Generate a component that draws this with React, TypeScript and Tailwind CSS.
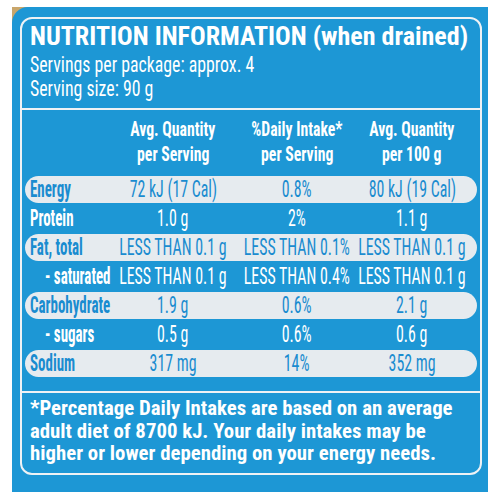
type Row = { label: string; indent?: boolean; pill?: boolean; v: [string, string, string] };

const rows: Row[] = [
  { label: "Energy", pill: true, v: ["72 kJ (17 Cal)", "0.8%", "80 kJ (19 Cal)"] },
  { label: "Protein", v: ["1.0 g", "2%", "1.1 g"] },
  { label: "Fat, total", pill: true, v: ["LESS THAN 0.1 g", "LESS THAN 0.1%", "LESS THAN 0.1 g"] },
  { label: "- saturated", indent: true, v: ["LESS THAN 0.1 g", "LESS THAN 0.4%", "LESS THAN 0.1 g"] },
  { label: "Carbohydrate", pill: true, v: ["1.9 g", "0.6%", "2.1 g"] },
  { label: "- sugars", indent: true, v: ["0.5 g", "0.6%", "0.6 g"] },
  { label: "Sodium", pill: true, v: ["317 mg", "14%", "352 mg"] },
];

function Cell({ text }: { text: string }) {
  return (
    <div className="flex justify-center whitespace-nowrap">
      <span className="inline-block origin-center scale-x-[0.69]">{text}</span>
    </div>
  );
}

export default function App() {
  return (
    <div className="h-[500px] w-[500px] overflow-hidden bg-white pl-[12px] pt-[7px] font-[family-name:Roboto,sans-serif] font-stretch-condensed text-white">
      <div className="h-[485px] w-[476px] bg-[#c9a66b]">
        <div className="h-full w-full rounded-tl-[16px] bg-[#1d97d5] pl-[8px] pt-[10px]">
          <div className="flex h-[458px] w-[462px] flex-col rounded-[12px] border-2 border-[#eef2f5]">
            {/* Title */}
            <div className="px-[8px] pb-[7px] pt-[4px]">
              <div className="whitespace-nowrap text-[26px] font-bold leading-[26px]">
                NUTRITION INFORMATION (when drained)
              </div>
              <div className="mt-[4px] whitespace-nowrap text-[22px] leading-[24px]">
                <div>
                  <span className="inline-block origin-left scale-x-[0.81]">Servings per package: approx. 4</span>
                </div>
                <div>
                  <span className="inline-block origin-left scale-x-[0.81]">Serving size: 90 g</span>
                </div>
              </div>
            </div>
            <div className="h-[2px] w-full bg-[#eef2f5]" />
            {/* Table */}
            <div className="px-[3px] pb-[14px] pt-[7px]">
              <div className="mb-[9px] grid grid-cols-[93px_110px_138px_92px] text-[21px] font-bold leading-[25px]">
                <div />
                <div className="flex flex-col items-center whitespace-nowrap">
                  <span className="inline-block scale-x-[0.75]">Avg. Quantity</span>
                  <span className="inline-block scale-x-[0.75]">per Serving</span>
                </div>
                <div className="flex flex-col items-center whitespace-nowrap">
                  <span className="inline-block scale-x-[0.75]">%Daily Intake*</span>
                  <span className="inline-block scale-x-[0.75]">per Serving</span>
                </div>
                <div className="flex flex-col items-center whitespace-nowrap">
                  <span className="inline-block scale-x-[0.75]">Avg. Quantity</span>
                  <span className="inline-block scale-x-[0.75]">per 100 g</span>
                </div>
              </div>
              {rows.map((r) => (
                <div
                  key={r.label}
                  className={
                    r.pill
                      ? "grid h-[27px] grid-cols-[93px_110px_138px_92px] items-center rounded-full bg-[#e6ebef] text-[23px] leading-[27px] text-[#1a8cd0]"
                      : "grid h-[31px] grid-cols-[93px_110px_138px_92px] items-center text-[23px] leading-[31px] text-white"
                  }
                >
                  <div className={r.indent ? "whitespace-nowrap pl-[20px] font-bold" : "whitespace-nowrap pl-[5px] font-bold"}>
                    <span className="inline-block origin-left scale-x-[0.65]">{r.label}</span>
                  </div>
                  <Cell text={r.v[0]} />
                  <Cell text={r.v[1]} />
                  <Cell text={r.v[2]} />
                </div>
              ))}
            </div>
            <div className="h-[2px] w-full bg-[#eef2f5]" />
            {/* Footer */}
            <div className="whitespace-nowrap px-[8px] pt-[4px] text-[20.8px] font-bold leading-[22.5px]">
              <div>*Percentage Daily Intakes are based on an average</div>
              <div>adult diet of 8700 kJ. Your daily intakes may be</div>
              <div>higher or lower depending on your energy needs.</div>
            </div>
          </div>
        </div>
      </div>
    </div>
  );
}
